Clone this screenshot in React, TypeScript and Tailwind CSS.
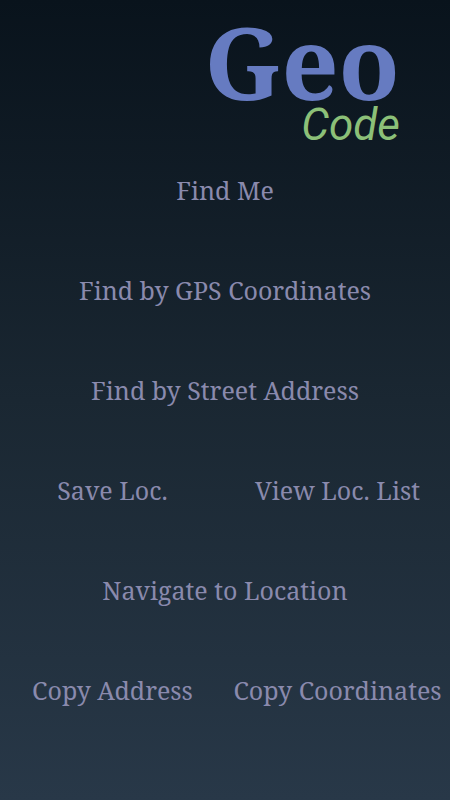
type Action = { label: string };

const rows: Action[][] = [
  [{ label: "Find Me" }],
  [{ label: "Find by GPS Coordinates" }],
  [{ label: "Find by Street Address" }],
  [{ label: "Save Loc." }, { label: "View Loc. List" }],
  [{ label: "Navigate to Location" }],
  [{ label: "Copy Address" }, { label: "Copy Coordinates" }],
];

export default function App() {
  return (
    <main className="flex min-h-screen flex-col bg-linear-to-b from-[#09131c] via-[#1a2732] to-[#283848] font-['Noto_Serif','DejaVu_Serif',serif] text-[#8a8aad]">
      <header className="flex flex-col items-end pt-[5px] pr-[50px]">
        <h1 className="text-[100px] leading-[112px] font-bold text-[#667bc1]">Geo</h1>
        <p className="-mt-[7px] font-[Roboto,sans-serif] text-[44px] leading-[30px] italic text-[#8cc078]">Code</p>
      </header>
      <nav aria-label="Location actions" className="flex flex-col">
        {rows.map((row) => (
          <div key={row[0].label} className="flex">
            {row.map((action) => (
              <button
                key={action.label}
                type="button"
                className="h-[100px] flex-1 basis-0 text-center text-[25px] leading-8 whitespace-nowrap"
              >
                {action.label}
              </button>
            ))}
          </div>
        ))}
      </nav>
    </main>
  );
}
